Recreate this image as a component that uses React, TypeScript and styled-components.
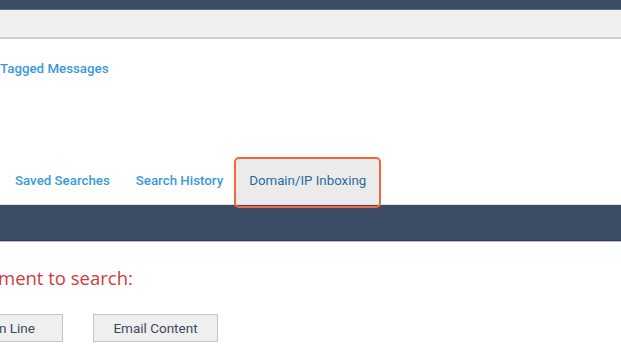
import React from 'react'
import styled, { createGlobalStyle } from 'styled-components'

const GlobalStyle = createGlobalStyle`
  html, body {
    margin: 0;
    padding: 0;
    background: #ffffff;
    overflow: hidden;
  }
  body {
    font-family: Roboto, "Liberation Sans", Arial, sans-serif;
  }
`

const Page = styled.div`
  width: 621px;
  height: 364px;
  overflow: hidden;
  display: flex;
  flex-direction: column;
`

const TopBar = styled.div`
  height: 9px;
  background: #3e4d66;
  border-bottom: 1px solid #5d6b80;
`

const SubBar = styled.div`
  height: 27px;
  background: #f0f0f0;
  border-bottom: 2px solid #cfcfcf;
`

const LinkRow = styled.div`
  display: flex;
  gap: 24px;
  padding-top: 22px;
  height: 98px;
`

const Link = styled.a`
  font-size: 13.3px;
  line-height: 16px;
  font-weight: 500;
  color: #3a9ad9;
  text-decoration: none;
  cursor: pointer;
`

const TabBar = styled.div`
  display: flex;
  align-items: flex-end;
  padding-left: 2px;
  height: 45px;
  border-bottom: 1px solid #dcdcdc;
`

const Tab = styled.div<{ $active?: boolean }>`
  position: relative;
  height: 45px;
  padding: 0 13px 2px;
  box-sizing: border-box;
  display: flex;
  align-items: center;
  font-size: 13.3px;
  font-weight: ${(p) => (p.$active ? 400 : 500)};
  color: ${(p) => (p.$active ? '#2c6aa0' : '#3a9ad9')};
  background: ${(p) => (p.$active ? '#ebebeb' : 'transparent')};
  border-radius: 3px 3px 0 0;
  cursor: pointer;
`

const Highlight = styled.span`
  position: absolute;
  left: -2px;
  right: -2px;
  top: -2px;
  bottom: -4px;
  border: 2.5px solid #f4673d;
  border-radius: 5px;
  pointer-events: none;
`

const Band = styled.div`
  height: 35px;
  background: #3e4d66;
  border-bottom: 1px solid #2c3c55;
  box-shadow: 0 1px 0 #b4bcc8;
`

const Heading = styled.h2`
  margin: 24px 0 0 -2px;
  font-family: "Open Sans", "Liberation Sans", sans-serif;
  font-size: 18.5px;
  line-height: 26px;
  font-weight: 400;
  color: #d03a40;
  white-space: nowrap;
`

const ButtonRow = styled.div`
  display: flex;
  gap: 30px;
  margin-top: 23px;
`

const OptionButton = styled.button<{ $clipped?: boolean }>`
  height: 28px;
  box-sizing: border-box;
  padding: ${(p) => (p.$clipped ? '0 28px 0 0' : '0 19px')};
  margin-left: ${(p) => (p.$clipped ? '-1px' : '0')};
  width: ${(p) => (p.$clipped ? '64px' : '125px')};
  flex-shrink: 0;
  text-align: ${(p) => (p.$clipped ? 'right' : 'center')};
  background: #efefef;
  border: 1px solid #c4c4c4;
  border-left-width: ${(p) => (p.$clipped ? '0' : '1px')};
  font-family: Roboto, "Liberation Sans", Arial, sans-serif;
  font-size: 13.5px;
  color: #3d4a5c;
  cursor: pointer;
  white-space: nowrap;
`

export default function App() {
  return (
    <>
      <GlobalStyle />
      <Page>
        <TopBar />
        <SubBar />
        <LinkRow>
          <Link>Tagged Messages</Link>
        </LinkRow>
        <TabBar>
          <Tab>Saved Searches</Tab>
          <Tab>Search History</Tab>
          <Tab $active>
            Domain/IP Inboxing
            <Highlight />
          </Tab>
        </TabBar>
        <Band />
        <Heading>ment to search:</Heading>
        <ButtonRow>
          <OptionButton $clipped>n Line</OptionButton>
          <OptionButton>Email Content</OptionButton>
        </ButtonRow>
      </Page>
    </>
  )
}
